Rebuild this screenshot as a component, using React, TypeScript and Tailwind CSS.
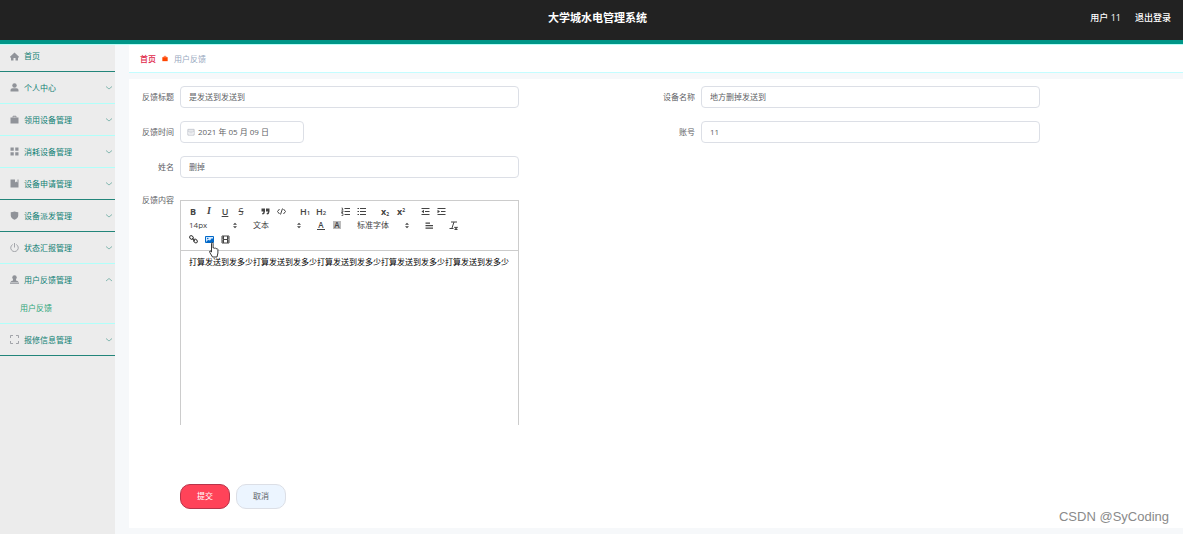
import React, { useState } from 'react';

type IconProps = { className?: string };

function Svg({ children, className = 'w-[9px] h-[9px]', box = 18 }: { children: React.ReactNode, className?: string, box?: number }) {
  return (
    <svg viewBox={`0 0 ${box} ${box}`} className={`shrink-0 ${className}`} fill="none" stroke="currentColor" strokeWidth="2" aria-hidden="true">
      {children}
    </svg>
  );
}

const solid = { fill: 'currentColor', stroke: 'none' };

const HomeIcon = () => <Svg><path {...solid} d="M9 1 0 9.500V11h2v6h5v-5h4v5h5v-6h2V9.500z" /></Svg>;
const UserIcon = () => <Svg><circle {...solid} cx="9" cy="5" r="4.500" /><path {...solid} d="M1 17v-3q0-3 4-3.500h8q4 .5 4 3.500v3z" /></Svg>;
const CaseIcon = (p: IconProps) => <Svg {...p}><path {...solid} d="M1 5h16v12H1z" /><path d="M6 5V2.500h6V5" /></Svg>;
const GridIcon = () => <Svg><path {...solid} d="M1 1h6.500v6.500H1zM10.500 1H17v6.500h-6.500zM1 10.500h6.500V17H1zM10.500 10.500H17V17h-6.500z" /></Svg>;
const BookIcon = () => <Svg><path {...solid} d="M1 1h9v6l2.500-2L15 7V1h2v16H1z" /></Svg>;
const ShieldIcon = () => <Svg><path {...solid} d="M9 1q4 1.500 7.500 1.500V9q-.5 6-7.500 8.500Q2 15 1.500 9V2.500Q5 2.500 9 1z" /></Svg>;
const PowerIcon = () => <Svg><path strokeWidth="1.600" d="M5.500 3a7.500 7.500 0 1 0 7 0M9 0v9" /></Svg>;
const StaffIcon = () => <Svg><circle {...solid} cx="9" cy="5" r="4.500" /><path {...solid} d="M6 8h6v3q4 0 5 3H1q1-3 5-3zM0 15h18v2.500H0z" /></Svg>;
const ScreenIcon = () => <Svg><path strokeWidth="1.600" d="M1 6V1h5M12 1h5v5M17 12v5h-5M6 17H1v-5" /></Svg>;

type Item = { label: string, icon: () => React.JSX.Element, line: string, children?: string[] };

const DARK = 'border-b-[#22857a]';
const LIGHT = 'border-b-[#b0fffa]';

const menu: Item[] = [
  { label: '个人中心', icon: UserIcon, line: LIGHT },
  { label: '领用设备管理', icon: CaseIcon, line: LIGHT },
  { label: '消耗设备管理', icon: GridIcon, line: LIGHT },
  { label: '设备申请管理', icon: BookIcon, line: DARK },
  { label: '设备派发管理', icon: ShieldIcon, line: DARK },
  { label: '状态汇报管理', icon: PowerIcon, line: LIGHT },
  { label: '用户反馈管理', icon: StaffIcon, line: LIGHT, children: ['用户反馈'] },
  { label: '报修信息管理', icon: ScreenIcon, line: DARK },
];

function Sidebar() {
  const [open, setOpen] = useState('用户反馈管理');

  return (
    <nav className="w-[115px] shrink-0 bg-[#ececec] text-[8px] text-[#0f8074]">
      <a href="#home" className={`flex items-center gap-[5px] h-[27px] pl-[10px] pb-1 border-b ${DARK}`}>
        <span className="text-[#909399]"><HomeIcon /></span>首页
      </a>
      {menu.map(({ label, icon: Icon, line, children }) => (
        <div key={label} className={`border-b ${line}`}>
          <button
            onClick={() => setOpen(open === label ? '' : label)}
            className="flex items-center gap-[5px] w-full h-[31px] pl-[10px] pr-[3px] text-left"
          >
            <span className="text-[#909399]"><Icon /></span>
            <span className="flex-1">{label}</span>
            <Svg className="w-[6px] h-[6px] text-[#84b8b1]" box={12}>
              <path d={open === label ? 'M0 8l6-5 6 5' : 'M0 3l6 5 6-5'} />
            </Svg>
          </button>
          {children && open === label && children.map((c) => (
            <a key={c} href="#feedback" className="flex items-center h-7 pl-5 pb-[2px] text-[#2fa67a]">{c}</a>
          ))}
        </div>
      ))}
    </nav>
  );
}

function Field({ id, label, value }: { id: string, label: string, value: string }) {
  return (
    <div className="flex items-center">
      <label htmlFor={id} className="w-[39px] shrink-0 pr-[6px] text-right whitespace-nowrap">{label}</label>
      <input id={id} defaultValue={value} className="w-[65%] h-[22px] px-2 pb-[2px] bg-white border border-[#dcdfe6] rounded-sm outline-none" />
    </div>
  );
}

function Tool({ name, children }: { name: string, children: React.ReactNode }) {
  return (
    <button type="button" aria-label={name} className="flex items-center justify-center w-4 h-[14px] leading-none">
      {children}
    </button>
  );
}

function Picker({ name, value, className }: { name: string, value: string, className: string }) {
  return (
    <div className={`relative flex ${className}`}>
      <select aria-label={name} className="w-full h-[14px] pl-1 appearance-none bg-transparent outline-none leading-none">
        <option>{value}</option>
      </select>
      <Svg className="absolute right-[3px] top-[4px] w-[6px] h-[7px] pointer-events-none">
        <path {...solid} d="M3 7l6-6 6 6zM3 11l6 6 6-6z" />
      </Svg>
    </div>
  );
}

const Group = ({ children }: { children: React.ReactNode }) => <div className="flex">{children}</div>;

function Toolbar() {
  return (
    <div className="pl-1 pt-[3px] pb-1 border-b border-[#ccc] text-[#444]">
      <div className="flex gap-2">
        <Group>
          <Tool name="加粗"><b className="text-[9px]">B</b></Tool>
          <Tool name="斜体"><i className="font-['Liberation_Serif',serif] font-bold text-[10px]">I</i></Tool>
          <Tool name="下划线"><u className="font-semibold text-[9px]">U</u></Tool>
          <Tool name="删除线"><s className="text-[9px]">S</s></Tool>
        </Group>
        <Group>
          <Tool name="引用">
            <Svg><path {...solid} d="M1 3h7v6q0 5-5 6l-1-2q3-1 3-4H1zM10 3h7v6q0 5-5 6l-1-2q3-1 3-4h-4z" /></Svg>
          </Tool>
          <Tool name="代码">
            <Svg><path d="M5 4 1 9l4 5M13 4l4 5-4 5M11 3 7 15" /></Svg>
          </Tool>
        </Group>
        <Group>
          <Tool name="标题一"><span className="font-semibold text-[9px]">H<sub className="text-[6px] bottom-0">1</sub></span></Tool>
          <Tool name="标题二"><span className="font-semibold text-[9px]">H<sub className="text-[6px] bottom-0">2</sub></span></Tool>
        </Group>
        <Group>
          <Tool name="有序列表">
            <Svg><path d="M7 3h11M7 9h11M7 15h11" /><path strokeWidth="1.500" d="M1 2h2v4M1 6h4M1 8h3v2H1v1h3M1 13h3v4H1" /></Svg>
          </Tool>
          <Tool name="无序列表">
            <Svg><path d="M6 3h12M6 9h12M6 15h12M1 3h3M1 9h3M1 15h3" /></Svg>
          </Tool>
        </Group>
        <Group>
          <Tool name="下标"><span className="font-bold text-[9px]">x<sub className="text-[5px]">2</sub></span></Tool>
          <Tool name="上标"><span className="font-bold text-[9px]">x<sup className="text-[5px]">2</sup></span></Tool>
        </Group>
        <Group>
          <Tool name="减少缩进">
            <Svg><path d="M1 3h16M8 9h9M1 15h16" /><path {...solid} d="M6 5.500v7L1 9z" /></Svg>
          </Tool>
          <Tool name="增加缩进">
            <Svg><path d="M1 3h16M8 9h9M1 15h16" /><path {...solid} d="M1 5.500v7L6 9z" /></Svg>
          </Tool>
        </Group>
      </div>
      <div className="flex gap-2">
        <Picker name="字号" value="14px" className="w-14" />
        <Picker name="段落" value="文本" className="w-14" />
        <Group>
          <Tool name="字体颜色"><span className="border-b border-[#444] px-px font-semibold text-[8px]">A</span></Tool>
          <Tool name="背景颜色"><span className="bg-[#bbb] px-px font-semibold text-[8px]">A</span></Tool>
        </Group>
        <Picker name="字体" value="标准字体" className="w-[60px]" />
        <Tool name="对齐">
          <Svg><path strokeWidth="2.500" d="M1 4h9M1 9h15M1 14h15" /></Svg>
        </Tool>
        <Tool name="清除格式">
          <Svg><path d="M4 2h12M10 2 6 14M1 15h8" /><path strokeWidth="3" d="M11 12l6 5M17 12l-6 5" /></Svg>
        </Tool>
      </div>
      <div className="flex">
        <Tool name="链接">
          <Svg><rect x="1" y="2" width="8" height="6" rx="3" transform="rotate(45 5 5)" /><rect x="9" y="9" width="8" height="6" rx="3" transform="rotate(45 13 12)" /><path d="M6 6l6 6" /></Svg>
        </Tool>
        <div className="relative text-[#0068c8]">
          <Tool name="图片">
            <Svg><path fill="#d6eaff" d="M1 3h16v12H1z" /><circle {...solid} cx="5.500" cy="7" r="1.500" /><path {...solid} d="M3 14v-2l4-2 3 1 4-5 2 2v6z" /></Svg>
          </Tool>
          <svg viewBox="0 0 10 16" className="absolute left-2 top-[10px] w-[10px] h-4 pointer-events-none" fill="#fff" stroke="#222" strokeWidth="0.900" aria-hidden="true">
            <path d="M2.500 1.500q0-1 .8-1t.8 1v4.500q1-.6 1.500.3 1-.5 1.500.4 1.500-.4 1.800.8v3.500L8 15H3.500L.8 10.500Q.2 9 1 8.800l1.500 1.200z" />
          </svg>
        </div>
        <Tool name="视频">
          <Svg><path d="M2 2h14v14H2zM5 2v14M13 2v14M5 9h8M2 6h3M2 12h3M13 6h3M13 12h3" /></Svg>
        </Tool>
      </div>
    </div>
  );
}

export default function App() {
  return (
    <div className="relative flex flex-col min-h-screen bg-[#f6f8fa] text-[8px] leading-[12px] text-[#606266] font-['Open_Sans','Noto_Sans_CJK_SC',sans-serif]">
      <header className="bg-[#222] text-white border-b-4 border-[#009688]">
        <div className="grid grid-cols-[1fr_auto_1fr] items-center h-10 pl-6 pr-3 pb-[5px]">
          <h1 className="col-start-2 text-[11px] font-bold">大学城水电管理系统</h1>
          <div className="flex justify-end gap-[14px] text-[9px] font-medium">
            <span>用户 11</span>
            <a href="#logout">退出登录</a>
          </div>
        </div>
      </header>

      <div className="flex flex-1 border-t border-[#b8fff8]">
        <Sidebar />
        <main className="flex flex-col flex-1 min-w-0 pl-[14px] pb-[6px]">
          <nav className="flex items-center gap-[6px] h-7 pl-[11px] bg-white border-b border-[#c4fdff]">
            <a href="#home" className="font-medium text-[#e0284a]">首页</a>
            <CaseIcon className="w-[6px] h-[7px] text-[#ff4500]" />
            <span className="text-[#97a8be]">用户反馈</span>
          </nav>

          <form className="flex-1 mt-[6px] pl-3 pt-[7px] bg-white" onSubmit={(e) => e.preventDefault()}>
            <div className="grid grid-cols-2 gap-y-[13px]">
              <Field id="title" label="反馈标题" value="是发送到发送到" />
              <Field id="device" label="设备名称" value="地方删掉发送到" />
              <div className="flex items-center">
                <label htmlFor="date" className="w-[39px] shrink-0 pr-[6px] text-right">反馈时间</label>
                <div className="flex items-center gap-[3px] w-[124px] h-[22px] pl-[6px] border border-[#dcdfe6] rounded-sm">
                  <Svg className="w-2 h-2 text-[#c0c4cc]"><path d="M2 3h14v13H2zM2 7h14M5 11h8" /></Svg>
                  <input id="date" defaultValue="2021 年 05 月 09 日" className="w-full min-w-0 outline-none" />
                </div>
              </div>
              <Field id="account" label="账号" value="11" />
              <Field id="name" label="姓名" value="删掉" />
            </div>

            <div className="flex mt-4">
              <label htmlFor="content" className="w-[39px] shrink-0 pr-[6px] text-right">反馈内容</label>
              <div className="w-1/2 min-w-0">
                <div className="w-[65%] min-w-[338px] mt-[6px] border border-b-0 border-[#ccc]">
                  <Toolbar />
                  <textarea
                    id="content"
                    defaultValue="打算发送到发多少打算发送到发多少打算发送到发多少打算发送到发多少打算发送到发多少"
                    className="block w-full h-[174px] pl-2 pt-[5px] resize-none outline-none overflow-hidden text-black"
                  />
                </div>
              </div>
            </div>

            <div className="flex gap-[6px] mt-[59px] ml-[39px]">
              <button type="submit" className="w-[50px] h-[25px] pb-[2px] rounded-[10px] border border-[#b8344a] bg-[#ff4359] text-white">提交</button>
              <button type="button" className="w-[50px] h-[25px] pb-[2px] rounded-[10px] border border-[#dcdfe6] bg-[#ecf5ff]">取消</button>
            </div>
          </form>
        </main>
      </div>

      <div className="absolute right-[14px] bottom-2 font-['Liberation_Sans',sans-serif] text-[13px] leading-[18px] text-[#8a8a8a] pointer-events-none">
        CSDN @SyCoding
      </div>
    </div>
  );
}
